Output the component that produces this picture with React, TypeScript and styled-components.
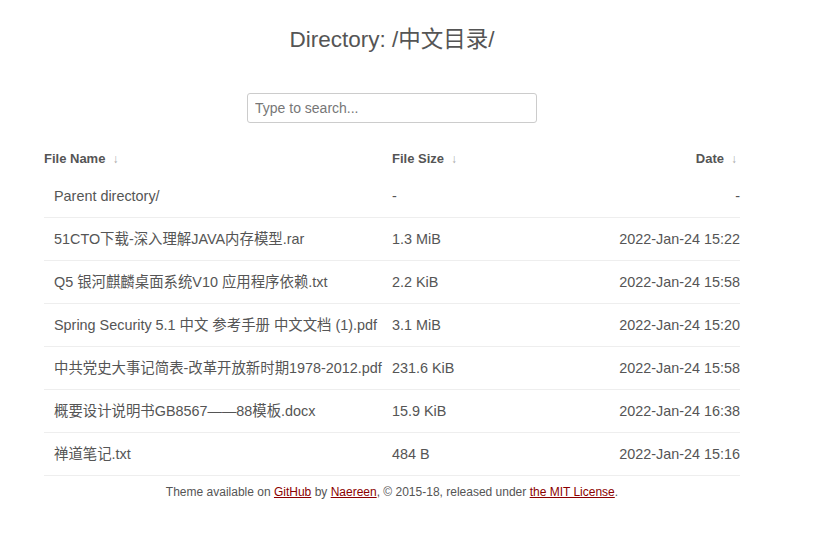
import React from "react";
import styled, { createGlobalStyle } from "styled-components";

const Global = createGlobalStyle`
  html, body { margin: 0; padding: 0; background: #fff; }
  body { font-family: "Liberation Sans", Arial, "Noto Sans CJK SC", sans-serif; color: #555; }
`;

const Page = styled.div`
  width: 784px;
  display: flex;
  flex-direction: column;
  align-items: center;
`;

const Title = styled.h1`
  margin: 27px 0 40px;
  font-size: 22.5px;
  line-height: 26px;
  font-weight: normal;
  color: #555;
`;

const Search = styled.input`
  box-sizing: border-box;
  width: 290px;
  height: 30px;
  padding: 0 7px;
  border: 1px solid #ccc;
  border-radius: 3px;
  font-family: inherit;
  font-size: 14px;
  color: #555;
  outline: none;
  &::placeholder { color: #777; }
`;

const Table = styled.table`
  margin-top: 18px;
  width: 696px;
  border-collapse: collapse;
  table-layout: fixed;
`;

const Th = styled.th<{ $align?: string; $w?: number }>`
  height: 34px;
  padding: 0 ${(p) => (p.$align === "right" ? "3px" : "0")} 0 0;
  font-size: 13px;
  font-weight: bold;
  color: #555;
  text-align: ${(p) => p.$align || "left"};
  width: ${(p) => (p.$w ? p.$w + "px" : "auto")};
`;

const Arrow = styled.span`
  font-weight: normal;
  color: #aaa;
  margin-left: 7px;
  font-size: 12px;
`;

const Tr = styled.tr`
  border-bottom: 1px solid #eee;
`;

const Td = styled.td<{ $align?: string; $pad?: number }>`
  height: 42px;
  padding: 0 0 0 ${(p) => p.$pad || 0}px;
  font-size: 14.4px;
  line-height: 17px;
  color: #555;
  white-space: nowrap;
  text-align: ${(p) => p.$align || "left"};
`;

const Footer = styled.footer`
  margin-top: 9px;
  font-size: 12px;
  color: #555;
  text-align: center;
  a { color: #8b0000; text-decoration: underline; }
`;

const rows = [
  ["Parent directory/", "-", "-"],
  ["51CTO下载-深入理解JAVA内存模型.rar", "1.3 MiB", "2022-Jan-24 15:22"],
  ["Q5 银河麒麟桌面系统V10 应用程序依赖.txt", "2.2 KiB", "2022-Jan-24 15:58"],
  ["Spring Security 5.1 中文 参考手册 中文文档 (1).pdf", "3.1 MiB", "2022-Jan-24 15:20"],
  ["中共党史大事记简表-改革开放新时期1978-2012.pdf", "231.6 KiB", "2022-Jan-24 15:58"],
  ["概要设计说明书GB8567——88模板.docx", "15.9 KiB", "2022-Jan-24 16:38"],
  ["禅道笔记.txt", "484 B", "2022-Jan-24 15:16"],
];

export default function App() {
  return (
    <Page>
      <Global />
      <Title>Directory: /中文目录/</Title>
      <Search placeholder="Type to search..." />
      <Table>
        <thead>
          <tr>
            <Th $w={348}>File Name<Arrow>↓</Arrow></Th>
            <Th $w={150}>File Size<Arrow>↓</Arrow></Th>
            <Th $align="right">Date<Arrow>↓</Arrow></Th>
          </tr>
        </thead>
        <tbody>
          {rows.map((r) => (
            <Tr key={r[0]}>
              <Td $pad={10}>{r[0]}</Td>
              <Td>{r[1]}</Td>
              <Td $align="right">{r[2]}</Td>
            </Tr>
          ))}
        </tbody>
      </Table>
      <Footer>
        Theme available on <a href="#">GitHub</a> by <a href="#">Naereen</a>, © 2015-18, released under{" "}
        <a href="#">the MIT License</a>.
      </Footer>
    </Page>
  );
}
